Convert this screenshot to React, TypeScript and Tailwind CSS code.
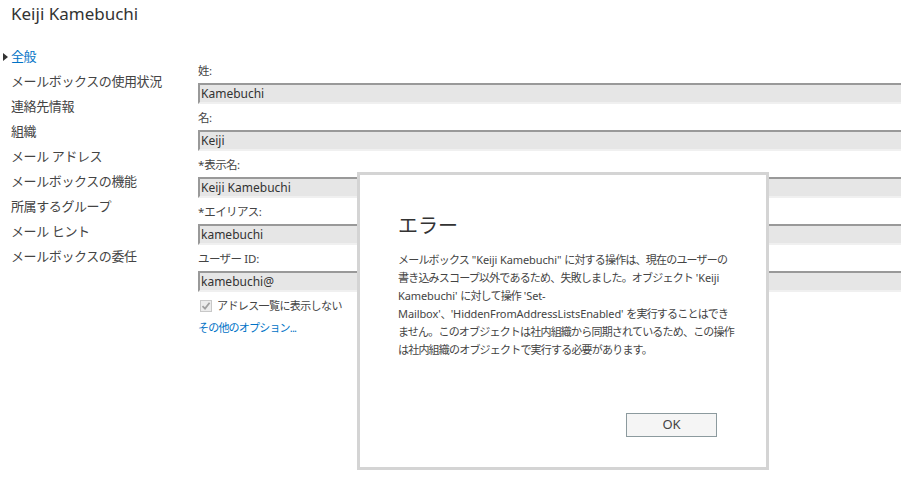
import React from 'react';

const font = '"Noto Sans", "Noto Sans CJK JP", sans-serif';

const navItems = [
  '全般',
  'メールボックスの使用状況',
  '連絡先情報',
  '組織',
  'メール アドレス',
  'メールボックスの機能',
  '所属するグループ',
  'メール ヒント',
  'メールボックスの委任',
];

const fields = [
  { label: '姓:', value: 'Kamebuchi' },
  { label: '名:', value: 'Keiji' },
  { label: '*表示名:', value: 'Keiji Kamebuchi' },
  { label: '*エイリアス:', value: 'kamebuchi' },
  { label: 'ユーザー ID:', value: 'kamebuchi@' },
];

const errorLines = [
  'メールボックス "Keiji Kamebuchi" に対する操作は、現在のユーザーの',
  '書き込みスコープ以外であるため、失敗しました。オブジェクト \'Keiji',
  'Kamebuchi\' に対して操作 \'Set-',
  'Mailbox\'、\'HiddenFromAddressListsEnabled\' を実行することはでき',
  'ません。このオブジェクトは社内組織から同期されているため、この操作',
  'は社内組織のオブジェクトで実行する必要があります。',
];

// latin runs keep normal spacing, japanese text is tightened to match the narrow UI font
function Mixed({ text, latin = 'text-[11px]' }: { text: string; latin?: string }) {
  const parts = text.split(/([\x20-\x7e]+)/).filter(Boolean);
  return (
    <>
      {parts.map((p, i) =>
        /^[\x20-\x7e]+$/.test(p) ? (
          <span key={i} className={`tracking-[-0.1px] ${latin}`}>
            {p}
          </span>
        ) : (
          <span key={i}>{p}</span>
        )
      )}
    </>
  );
}

export default function App() {
  return (
    <div
      className="relative w-[901px] h-[495px] overflow-hidden bg-white text-[#333]"
      style={{ fontFamily: font }}
    >
      <h1 className="h-[28px] pl-[11px] text-[17px] leading-[28px] text-[#333]">Keiji Kamebuchi</h1>

      <div className="flex mt-[12px]">
        {/* left nav */}
        <ul className="w-[198px] shrink-0 pt-[4px]">
          {navItems.map((item, i) => (
            <li
              key={item}
              className={`relative h-[25px] pl-[11px] text-[13px] leading-[25px] tracking-[-0.4px] ${
                i === 0 ? 'text-[#0072c6]' : 'text-[#444]'
              }`}
            >
              {i === 0 && (
                <span className="absolute left-[3px] top-[9px] w-0 h-0 border-y-[4px] border-y-transparent border-l-[5px] border-l-[#333]" />
              )}
              {item}
            </li>
          ))}
        </ul>

        {/* form */}
        <div className="flex-1 pt-[19px] text-[12px]">
          {fields.map((f) => (
            <div key={f.label} className="mb-[2px]">
              <div className="h-[24px] leading-[24px] text-[11.5px] tracking-[-0.6px] text-[#444]">
                <Mixed text={f.label} latin="text-[11.5px]" />
              </div>
              <div className="h-[21px] w-[720px] border-t-2 border-l-2 border-b-2 border-t-[#999] border-l-[#999] border-b-[#f0f0f0] bg-[#e6e6e6] pl-[1px] leading-[17px] text-[#333]">
                {f.value}
              </div>
            </div>
          ))}
          <div className="flex items-center gap-[5px] h-[24px] pl-[2px] mt-[2px]">
            <span className="flex items-center justify-center w-[12px] h-[12px] border border-[#c8c8c8] bg-[#ececec]">
              <svg width="10" height="10" viewBox="0 0 10 10">
                <path d="M1.5 5.2 L4 7.6 L8.6 1.8" fill="none" stroke="#a0a0a0" strokeWidth="1.8" />
              </svg>
            </span>
            <span className="text-[11px] tracking-[-0.6px] text-[#444]">アドレス一覧に表示しない</span>
          </div>
          <div className="h-[20px] leading-[20px] text-[11px] tracking-[-0.8px] text-[#0072c6]">その他のオプション...</div>
        </div>
      </div>

      {/* error dialog */}
      <div className="absolute left-[357px] top-[172px] w-[412px] h-[298px] border-[3px] border-[#d4d4d4] bg-white flex flex-col">
        <div className="pl-[38px] mt-[37px] h-[28px] text-[20px] leading-[28px] text-[#333]">エラー</div>
        <div className="pl-[38px] mt-[11px] text-[11px] leading-[18px] tracking-[-0.8px] text-[#444]">
          {errorLines.map((line) => (
            <div key={line} className="whitespace-nowrap">
              <Mixed text={line} />
            </div>
          ))}
        </div>
        <div className="flex-1" />
        <div className="flex justify-end pr-[49px] pb-[30px]">
          <button className="w-[91px] h-[24px] border border-[#8c9a9e] bg-[#f5f5f5] text-[13px] text-[#444]">
            OK
          </button>
        </div>
      </div>
    </div>
  );
}
